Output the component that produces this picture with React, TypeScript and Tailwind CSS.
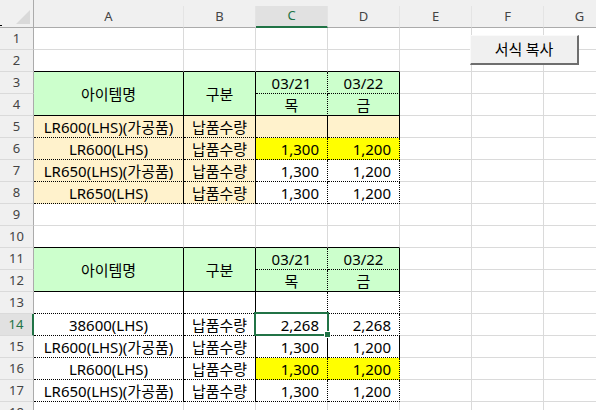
import React from 'react';

type Bd = 'g' | 's' | 'd';
type Cell = {
  t?: string;
  al?: 'c' | 'r';
  bg?: string;
  r?: Bd;
  b?: Bd;
  span?: boolean;
  vc?: boolean;
  skip?: boolean;
};

const RC: Record<Bd, string> = {
  g: 'border-r border-r-[#dadada]',
  s: 'border-r border-r-black',
  d: 'border-r border-r-black [border-right-style:dotted]',
};
const BC: Record<Bd, string> = {
  g: 'border-b border-b-[#dadada]',
  s: 'border-b border-b-black',
  d: 'border-b border-b-black [border-bottom-style:dotted]',
};

const GR = 'bg-[#ccffcc]';
const OR = 'bg-[#fff2cc]';
const YE = 'bg-[#ffff00]';

function buildRows(): Cell[][] {
  const rows: Cell[][] = [];
  for (let i = 1; i <= 18; i++) rows.push(Array.from({ length: 7 }, () => ({} as Cell)));
  const row = (n: number) => rows[n - 1];

  [2, 10].forEach((n) => {
    for (let c = 0; c < 4; c++) row(n)[c].b = 's';
  });

  const header = (n: number) => {
    row(n)[0] = { t: '아이템명', al: 'c', bg: GR, r: 's', b: 's', span: true, vc: true };
    row(n)[1] = { t: '구분', al: 'c', bg: GR, r: 's', b: 's', span: true, vc: true };
    row(n)[2] = { t: '03/21', al: 'c', bg: GR, r: 'd', b: 'd', vc: true };
    row(n)[3] = { t: '03/22', al: 'c', bg: GR, r: 's', b: 'd', vc: true };
    row(n + 1)[0] = { skip: true };
    row(n + 1)[1] = { skip: true };
    row(n + 1)[2] = { t: '목', al: 'c', bg: GR, r: 'd', b: 's', vc: true };
    row(n + 1)[3] = { t: '금', al: 'c', bg: GR, r: 's', b: 's', vc: true };
  };

  const body = (
    n: number,
    a: string,
    bt: string,
    c: string,
    d: string,
    abBg: string | undefined,
    cdBg: string | undefined,
    cdR: Bd
  ) => {
    row(n)[0] = { t: a, al: 'c', bg: abBg, r: 's', b: 'd' };
    row(n)[1] = { t: bt, al: 'c', bg: abBg, r: 's', b: 'd' };
    row(n)[2] = { t: c, al: 'r', bg: cdBg, r: cdR, b: 'd' };
    row(n)[3] = { t: d, al: 'r', bg: cdBg, r: cdR, b: 'd' };
  };

  header(3);
  body(5, 'LR600(LHS)(가공품)', '납품수량', '', '', OR, OR, 's');
  body(6, 'LR600(LHS)', '납품수량', '1,300', '1,200', OR, YE, 'd');
  body(7, 'LR650(LHS)(가공품)', '납품수량', '1,300', '1,200', OR, undefined, 'd');
  body(8, 'LR650(LHS)', '납품수량', '1,300', '1,200', OR, undefined, 'd');

  header(11);
  body(13, '', '', '', '', undefined, undefined, 'd');
  body(14, '38600(LHS)', '납품수량', '2,268', '2,268', undefined, undefined, 'd');
  body(15, 'LR600(LHS)(가공품)', '납품수량', '1,300', '1,200', undefined, undefined, 's');
  body(16, 'LR600(LHS)', '납품수량', '1,300', '1,200', undefined, YE, 'd');
  body(17, 'LR650(LHS)(가공품)', '납품수량', '1,300', '1,200', undefined, undefined, 'd');

  return rows;
}

const COLS = ['A', 'B', 'C', 'D', 'E', 'F', 'G'];

export default function App() {
  const rows = buildRows();
  return (
    <div className="relative w-[596px] h-[410px] overflow-hidden bg-white font-['Noto_Sans','Noto_Sans_CJK_KR',sans-serif] text-black">
      <div className="grid grid-cols-[34px_150px_72px_72px_72px_72px_72px_72px] grid-rows-[28px_repeat(18,22px)] w-[616px]">
        {/* corner */}
        <div className="flex items-end justify-end pr-[3px] pb-[3px] bg-[#f0f0f0] border-r border-r-[#ababab] border-b border-b-[#ababab]">
          <svg width="14" height="14" viewBox="0 0 14 14">
            <polygon points="14,0 14,14 0,14" fill="#d9d9d9" />
          </svg>
        </div>
        {COLS.map((c) => {
          const sel = c === 'C';
          return (
            <div key={c} className="flex flex-col bg-[#f0f0f0]">
              <div className="h-[6px]" />
              <div
                className={
                  sel
                    ? 'flex-1 flex items-center justify-center bg-[#e1e1e1] text-[#217346] text-[13px] border-b-2 border-b-[#217346] border-r border-r-[#e4e4e4]'
                    : 'flex-1 flex items-center justify-center text-[#444444] text-[13px] border-b border-b-[#ababab] border-r border-r-[#e4e4e4]'
                }
              >
                {c}
              </div>
            </div>
          );
        })}
        {rows.map((cells, i) => {
          const n = i + 1;
          const sel = n === 14;
          return (
            <React.Fragment key={n}>
              <div
                className={
                  sel
                    ? 'flex items-center justify-center bg-[#e1e1e1] text-[#217346] text-[13px] border-r-2 border-r-[#217346] border-b border-b-[#dadada]'
                    : 'flex items-center justify-center bg-[#f0f0f0] text-[#444444] text-[13px] border-r border-r-[#ababab] border-b border-b-[#dadada]'
                }
              >
                {n}
              </div>
              {cells.map((c, j) => {
                if (c.skip) return null;
                const cls = [
                  RC[c.r ?? 'g'],
                  BC[c.b ?? 'g'],
                  c.bg ?? '',
                  c.span ? 'row-span-2' : '',
                  'flex overflow-hidden whitespace-nowrap text-[15px] leading-[20px]',
                  c.vc ? 'items-center' : 'items-end',
                  c.al === 'r' ? 'justify-end pr-[8px]' : 'justify-center',
                ].join(' ');
                return (
                  <div key={j} className={cls}>
                    {c.t}
                  </div>
                );
              })}
            </React.Fragment>
          );
        })}
      </div>

      {/* small mark at left edge */}
      <div className="absolute left-0 top-[25px] w-[2px] h-[1px] bg-black" />

      {/* selection box on C14 */}
      <div className="absolute left-[254px] top-[312px] w-[75px] h-[24px] border-2 border-[#217346]" />
      <div className="absolute left-[324px] top-[331px] w-[7px] h-[7px] bg-[#217346] border border-white" />

      {/* button */}
      <div className="absolute left-[470px] top-[35px] w-[109px] h-[30px] flex items-center justify-center bg-[#f0f0f0] border-t border-l border-t-[#fafafa] border-l-[#fafafa] border-r-2 border-b-2 border-r-[#6e6e6e] border-b-[#6e6e6e] text-[15px] font-['Noto_Sans_CJK_KR',sans-serif] text-black">
        서식 복사
      </div>
    </div>
  );
}
